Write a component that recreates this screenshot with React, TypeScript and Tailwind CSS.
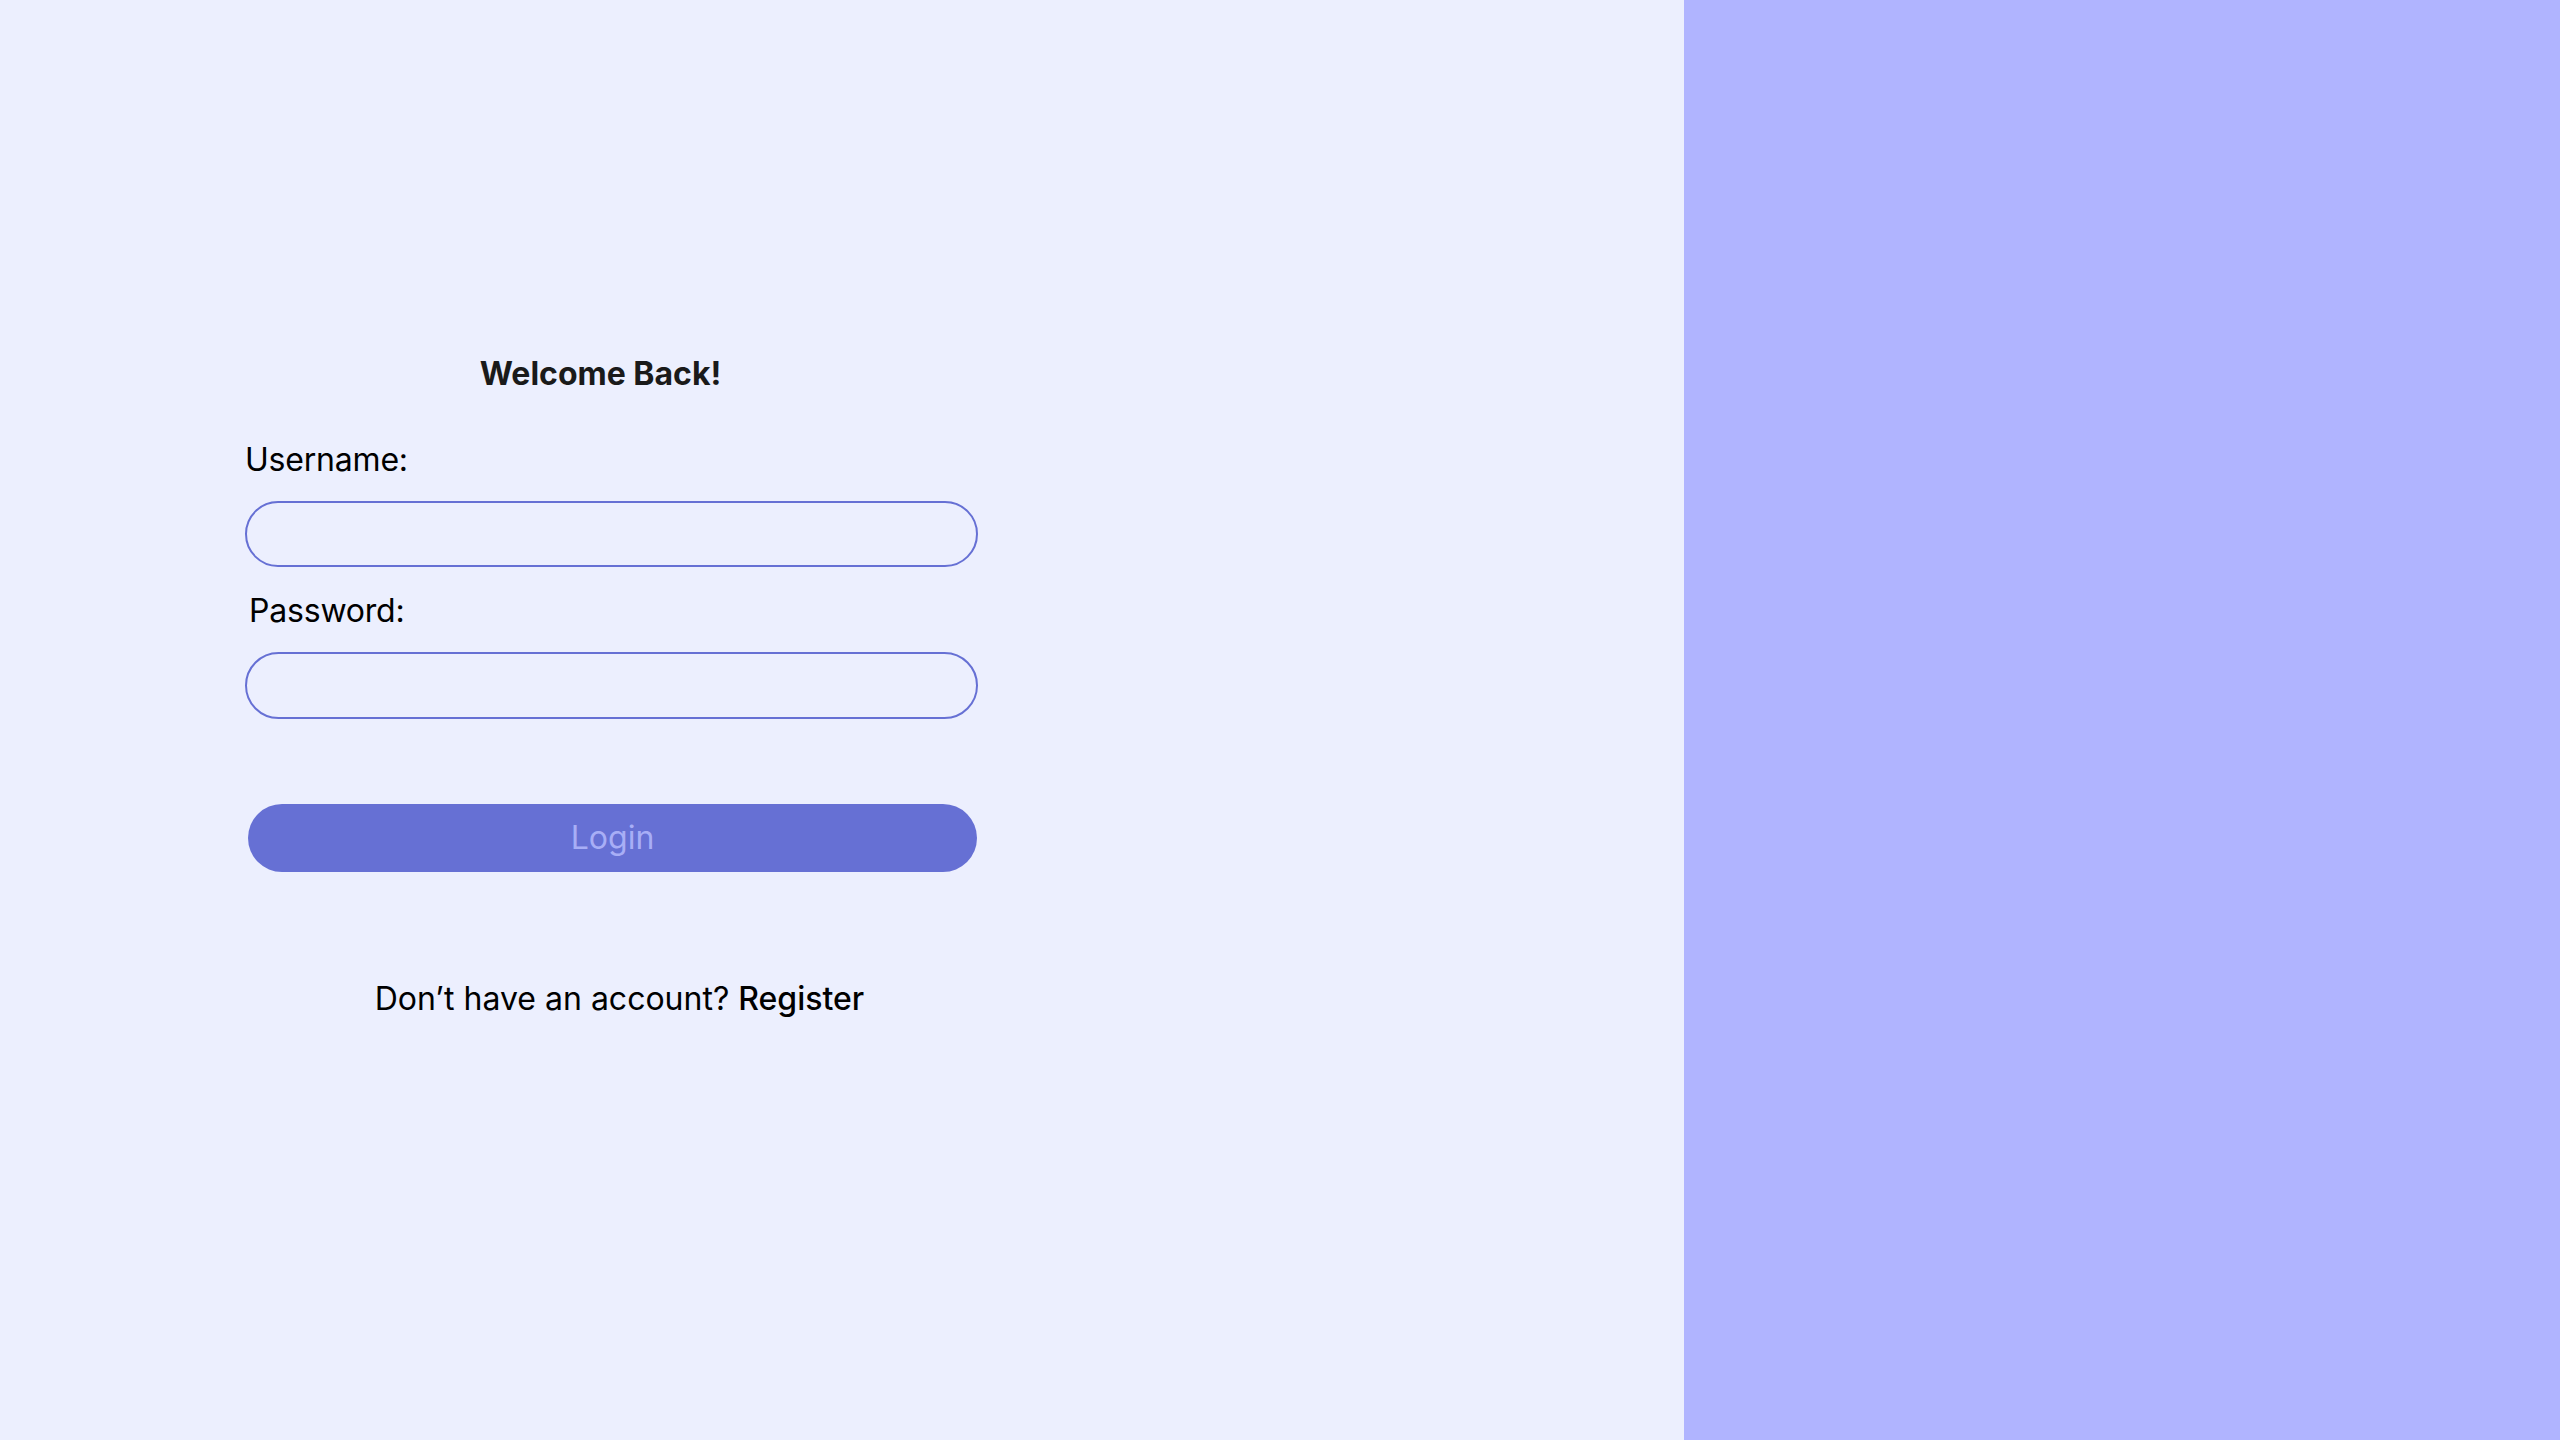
export default function App() {
  return (
    <div className="flex h-[1440px] w-[2560px] font-['Inter',sans-serif]">
      <main className="flex h-full w-[1684px] shrink-0 flex-col bg-[#eceffe] pl-[245px] pt-[354px]">
        <form className="flex w-[733px] flex-col" onSubmit={(e) => e.preventDefault()}>
          <h1 className="pr-[22px] text-center text-[32px] font-bold leading-[40px] text-[#1a1a1a]">
            Welcome Back!
          </h1>

          <label htmlFor="username" className="mt-[46px] text-[32px] leading-[40px] tracking-[-0.2px] text-black">
            Username:
          </label>
          <input
            id="username"
            type="text"
            className="mt-[21px] h-[66px] w-full rounded-full border-2 border-[#6670d4] bg-transparent px-6 text-[30px] outline-none"
          />

          <label htmlFor="password" className="mt-[24px] pl-[4px] text-[32px] leading-[40px] tracking-[-0.2px] text-black">
            Password:
          </label>
          <input
            id="password"
            type="password"
            className="mt-[21px] h-[67px] w-full rounded-full border-2 border-[#6670d4] bg-transparent px-6 text-[30px] outline-none"
          />

          <button
            type="submit"
            className="ml-[3px] mt-[85px] h-[68px] w-[729px] rounded-full bg-[#6670d4] text-[32px] leading-[40px] text-[#a8aef6]"
          >
            Login
          </button>

          <p className="mt-[107px] pl-[16px] text-center text-[32px] leading-[40px] text-black">
            Don’t have an account? <a href="#" className="font-medium">Register</a>
          </p>
        </form>
      </main>
      <aside className="h-full flex-1 bg-[#b0b4ff]" />
    </div>
  )
}
